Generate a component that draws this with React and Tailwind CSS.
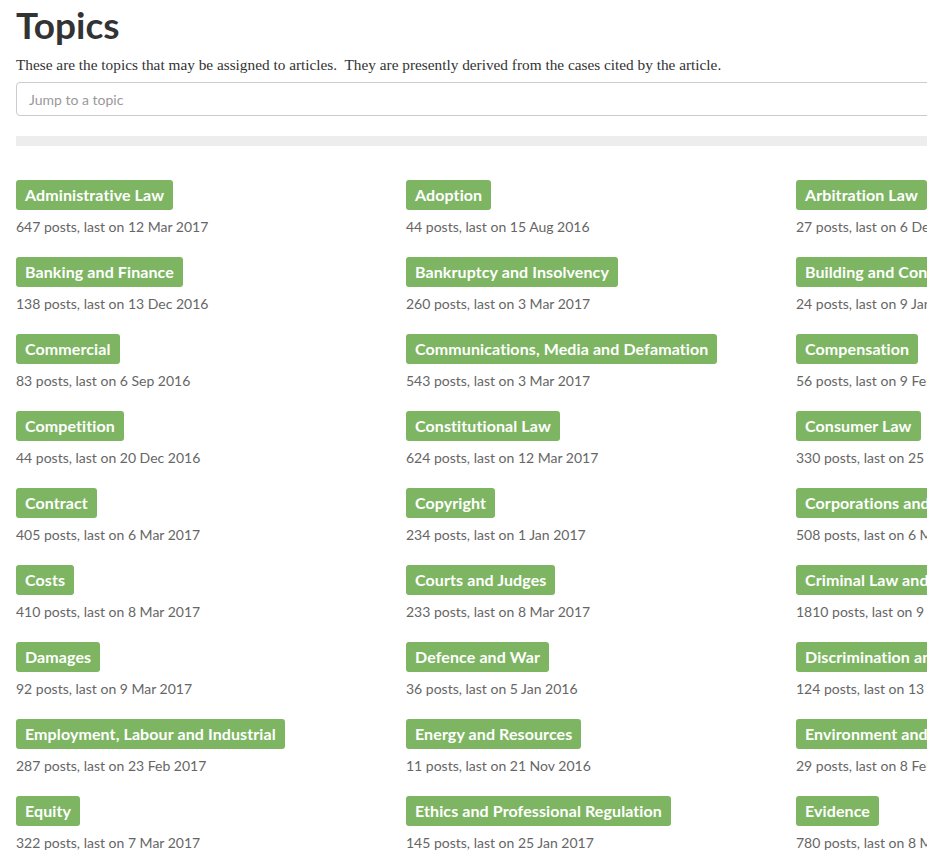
import React from "react";

const topics = [
  ["Administrative Law", "647 posts, last on 12 Mar 2017"],
  ["Adoption", "44 posts, last on 15 Aug 2016"],
  ["Arbitration Law", "27 posts, last on 6 Dec 2016"],
  ["Banking and Finance", "138 posts, last on 13 Dec 2016"],
  ["Bankruptcy and Insolvency", "260 posts, last on 3 Mar 2017"],
  ["Building and Construction", "24 posts, last on 9 Jan 2017"],
  ["Commercial", "83 posts, last on 6 Sep 2016"],
  ["Communications, Media and Defamation", "543 posts, last on 3 Mar 2017"],
  ["Compensation", "56 posts, last on 9 Feb 2017"],
  ["Competition", "44 posts, last on 20 Dec 2016"],
  ["Constitutional Law", "624 posts, last on 12 Mar 2017"],
  ["Consumer Law", "330 posts, last on 25 Feb 2017"],
  ["Contract", "405 posts, last on 6 Mar 2017"],
  ["Copyright", "234 posts, last on 1 Jan 2017"],
  ["Corporations and Associations", "508 posts, last on 6 Mar 2017"],
  ["Costs", "410 posts, last on 8 Mar 2017"],
  ["Courts and Judges", "233 posts, last on 8 Mar 2017"],
  ["Criminal Law and Procedure", "1810 posts, last on 9 Mar 2017"],
  ["Damages", "92 posts, last on 9 Mar 2017"],
  ["Defence and War", "36 posts, last on 5 Jan 2016"],
  ["Discrimination and Human Rights", "124 posts, last on 13 Feb 2017"],
  ["Employment, Labour and Industrial", "287 posts, last on 23 Feb 2017"],
  ["Energy and Resources", "11 posts, last on 21 Nov 2016"],
  ["Environment and Planning", "29 posts, last on 8 Feb 2017"],
  ["Equity", "322 posts, last on 7 Mar 2017"],
  ["Ethics and Professional Regulation", "145 posts, last on 25 Jan 2017"],
  ["Evidence", "780 posts, last on 8 Mar 2017"],
];

export default function App() {
  return (
    <div className="bg-white text-[#333] font-['Lato',sans-serif] overflow-hidden">
      <div className="w-[1202px] px-4">
        <h1 className="text-[37px] font-bold leading-[48px] pt-[1px] text-[#333]">Topics</h1>
        <p className="font-['Liberation_Serif',serif] text-[15.3px] leading-5 mt-[6px] text-[#333]">
          These are the topics that may be assigned to articles.&nbsp; They are presently derived from the cases cited by the article.
        </p>
        <input
          placeholder="Jump to a topic"
          className="mt-[7px] block w-full h-[34px] rounded border border-[#cccccc] px-3 text-[14px] text-[#333] placeholder-[#999] outline-none"
        />
        <div className="mt-[20px] h-[10px] bg-[#ededed]" />
        <div className="grid grid-cols-3 mt-[34px] gap-y-[20px]">
          {topics.map(([name, info]) => (
            <div key={name} className="flex flex-col items-start">
              <span className="h-[30px] leading-[30px] px-[9px] rounded-[3px] bg-[#7db562] text-white font-bold text-[16px] tracking-[0.1px] whitespace-nowrap">
                {name}
              </span>
              <span className="mt-[6px] text-[14px] leading-[21px] text-[#666] whitespace-nowrap">{info}</span>
            </div>
          ))}
        </div>
      </div>
    </div>
  );
}
